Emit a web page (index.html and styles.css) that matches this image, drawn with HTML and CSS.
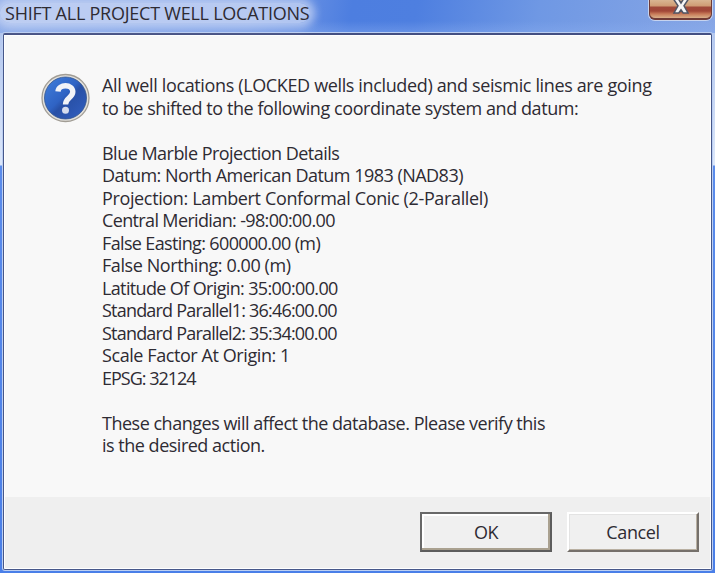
FILE: index.html
```html
<!DOCTYPE html>
<html lang="en">

<head>
  <meta charset="UTF-8">
  <title>SHIFT ALL PROJECT WELL LOCATIONS</title>
  <link rel="stylesheet" href="styles.css">
</head>

<body>
  <div class="window">
    <div class="titlebar">
      <h1>SHIFT ALL PROJECT WELL LOCATIONS</h1>
      <button class="close" aria-label="Close">
        <svg width="18" height="18" viewBox="0 0 18 18">
          <path d="M1.500-1h5L9 3l2.500-4h5l-4.500 6.800L16 13h-4.800L9 9.800 6.800 13H2l4-7.200z" fill="#f5f5f5" stroke="#515564" stroke-width="1.500"/>
        </svg>
      </button>
    </div>
    <div class="dialog">
      <div class="content">
        <svg class="icon" width="50" height="50" viewBox="0 0 50 50">
          <defs>
            <linearGradient id="ball" x1="0" y1="0" x2="1" y2="1">
              <stop offset="0" stop-color="#4280dc"/>
              <stop offset="0.450" stop-color="#2f63c4"/>
              <stop offset="0.550" stop-color="#2850a6"/>
              <stop offset="1" stop-color="#3260c2"/>
            </linearGradient>
          </defs>
          <circle cx="24.500" cy="25" r="23.500" fill="#e2e0dc" stroke="#a19d95" stroke-width="1.300"/>
          <circle cx="24.500" cy="25" r="21" fill="url(#ball)" stroke="#34558e" stroke-width="0.800"/>
          <path d="M17 18.500C17.500 10.800 31.800 10.800 31.800 18.800c0 6-7.300 6-7.300 12.700" fill="none" stroke="#f2f3f7" stroke-width="5.400"/>
          <circle cx="24.500" cy="37.300" r="3.500" fill="#d5dcee"/>
        </svg>
        <div class="message">
          <p>
            <span class="l1">All well locations (LOCKED wells included) and seismic lines are going</span>
            <span class="l2">to be shifted to the following coordinate system and datum:</span>
          </p>
          <p>
            <span class="l3">Blue Marble Projection Details</span>
            <span class="l4">Datum: North American Datum 1983 (NAD83)</span>
            <span class="l5">Projection: Lambert Conformal Conic (2-Parallel)</span>
            <span class="l6">Central Meridian: -98:00:00.00</span>
            <span class="l7">False Easting: 600000.00 (m)</span>
            <span class="l8">False Northing: 0.00 (m)</span>
            <span class="l9">Latitude Of Origin: 35:00:00.00</span>
            <span class="l10">Standard Parallel1: 36:46:00.00</span>
            <span class="l11">Standard Parallel2: 35:34:00.00</span>
            <span class="l12">Scale Factor At Origin: 1</span>
            <span class="l13">EPSG: 32124</span>
          </p>
          <p>
            <span class="l14">These changes will affect the database. Please verify this</span>
            <span class="l15">is the desired action.</span>
          </p>
        </div>
      </div>
      <div class="buttons">
        <button class="btn default">OK</button>
        <button class="btn">Cancel</button>
      </div>
    </div>
  </div>
</body>

</html>
```
FILE: styles.css
```css
* {
  box-sizing: border-box;
}

body {
  margin: 0;
  background-color: #fff;
  font-family: "Open Sans", "Noto Sans", sans-serif;
  font-size: 18px;
  color: #2e2b33;
}

/* Glass frame around the dialog */
.window {
  width: 715px;
  height: 573px;
  padding: 0 3px;
  background: linear-gradient(to bottom, #a9bfec 0, #dce7fa 165px, #5b8cec 166px, #4a7fe8 100%);
  overflow: hidden;
}

.titlebar {
  display: flex;
  justify-content: space-between;
  align-items: flex-start;
  height: 33px;
  margin: 0 -3px;
  padding: 0 3px 0 0;
  background: linear-gradient(to top, rgba(140, 175, 240, 0.4), rgba(140, 175, 240, 0) 12px),
    linear-gradient(100deg, #92aee8 0, #7d9fe5 35%, #4d7ee0 49%, #4e7fe0 58%, #6f98e4 75%, #87a6e5 100%);
}

/* Soft glow behind the caption */
h1 {
  margin: 0;
  padding: 0 0 0 5px;
  height: 20px;
  margin-top: 3px;
  font-size: 18px;
  font-weight: 400;
  line-height: 20px;
  letter-spacing: -0.24px;
  white-space: nowrap;
  border-radius: 10px;
  background-color: rgba(208, 220, 246, 0.7);
  box-shadow: 0 0 8px 5px rgba(208, 220, 246, 0.7);
}

.close {
  width: 63px;
  height: 20px;
  padding: 0;
  border: 1px solid #703a36;
  border-top: 0;
  border-bottom-width: 2px;
  border-radius: 0 0 6px 6px;
  background: linear-gradient(to bottom, #d9b692 0, #cf9c74 6px, #a04a3a 7px, #a14637 11px, #c87b59 14px, #d9b08a 100%);
  box-shadow: 0 0 0 1px #c6d3ef;
  overflow: hidden;
}

.close svg {
  display: block;
  margin: 0 auto;
}

.dialog {
  display: flex;
  flex-direction: column;
  height: 537px;
  border: 1px solid #46578a;
  border-top: 2px solid #434f82;
  border-radius: 2px;
  background-color: #f8f8f8;
  box-shadow: 0 0 0 1px #bccff2, inset 0 0 0 1px #fff;
}

.content {
  display: flex;
  flex: 1;
  padding: 38px 0 0 37px;
}

.icon {
  flex: none;
}

.message {
  padding: 1px 0 0 11px;
}

.message p {
  margin: 0 0 22.5px;
  line-height: 22.5px;
}

.message span {
  display: block;
  width: max-content;
  white-space: nowrap;
}

.l1, .l5 { letter-spacing: -0.36px; }
.l2, .l8, .l12 { letter-spacing: -0.42px; }
.l3, .l4 { letter-spacing: -0.52px; }
.l6, .l7, .l9 { letter-spacing: -0.64px; }
.l10, .l11 { letter-spacing: -0.8px; }
.l13 { letter-spacing: -1px; }
.l14, .l15 { letter-spacing: -0.49px; }

.buttons {
  display: flex;
  justify-content: flex-end;
  gap: 15px;
  height: 71px;
  margin: 0 1px 1px;
  padding: 15px 11px 0 0;
  background-color: #efefef;
}

.btn {
  width: 132px;
  height: 40px;
  padding: 0;
  border: 2px solid;
  border-color: #fff #75706b #75706b #fff;
  background-color: #f0f0f0;
  box-shadow: inset -1px -1px 0 #b9b0a2, inset 1px 1px 0 #e3e3e3;
  color: inherit;
  font-family: inherit;
  font-size: 18px;
  letter-spacing: -0.4px;
}

.default {
  border-color: #686868 #5c5c5c #5c5c5c #686868;
  box-shadow: inset -2px -2px 0 #aaa190, inset 2px 2px 0 #fff;
}
```
